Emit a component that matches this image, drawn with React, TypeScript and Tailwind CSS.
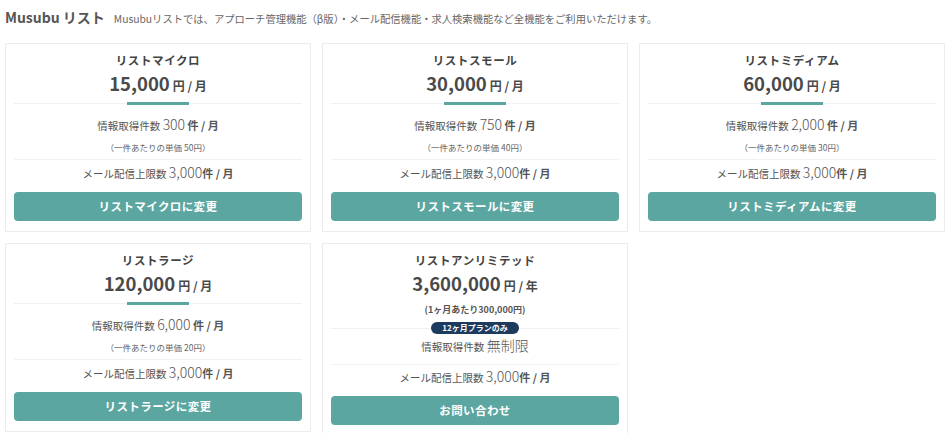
import React from "react";

const TEAL = "bg-[#5ba6a0]";

type Plan = {
  name: string;
  price: string;
  unit: string;
  count: string;
  unitPrice: string;
  button: string;
};

const plans: Plan[] = [
  { name: "リストマイクロ", price: "15,000", unit: "月", count: "300", unitPrice: "50円", button: "リストマイクロに変更" },
  { name: "リストスモール", price: "30,000", unit: "月", count: "750", unitPrice: "40円", button: "リストスモールに変更" },
  { name: "リストミディアム", price: "60,000", unit: "月", count: "2,000", unitPrice: "30円", button: "リストミディアムに変更" },
  { name: "リストラージ", price: "120,000", unit: "月", count: "6,000", unitPrice: "20円", button: "リストラージに変更" },
];

function Title({ name, price, unit }: { name: string; price: string; unit: string }) {
  return (
    <>
      <div className="pt-[6px] h-[26px] text-center text-[11.5px] leading-[20px] font-bold text-[#444] tracking-[0.6px]">{name}</div>
      <div className="h-[28px] text-center leading-[28px] text-[#4a4a4a]">
        <span className="text-[18.5px] font-bold leading-none">{price}</span>
        <span className="text-[12px] font-bold ml-[3px] leading-none">円 / {unit}</span>
      </div>
    </>
  );
}

function Mail() {
  return (
    <div className="h-[22px] text-center leading-[22px] text-[10.5px] text-[#555]">
      メール配信上限数 <span className="text-[14px] font-light leading-none">3,000</span>
      <span className="text-[11px] font-bold leading-none">件 / 月</span>
    </div>
  );
}

function Btn({ label }: { label: string }) {
  return (
    <div className={`mt-[7px] h-[29px] rounded-[4px] ${TEAL} flex items-center justify-center text-white text-[11.5px] font-bold tracking-[0.4px]`}>
      {label}
    </div>
  );
}

function Card({ p }: { p: Plan }) {
  return (
    <div className="border border-[#ececec] bg-white px-[8px] pb-[10px] flex flex-col">
      <Title name={p.name} price={p.price} unit={p.unit} />
      <div className="relative h-[3px] mt-[4px]">
        <div className="absolute inset-x-0 top-[1px] h-px bg-[#eef1f3]" />
        <div className={`relative mx-auto w-[62px] h-[3px] ${TEAL}`} />
      </div>
      <div className="mt-[10px] h-[22px] text-center leading-[22px] text-[10.5px] text-[#555]">
        情報取得件数 <span className="text-[14px] font-light leading-none">{p.count}</span>{" "}
        <span className="text-[11px] font-bold leading-none">件 / 月</span>
      </div>
      <div className="mt-[2px] h-[16px] text-center leading-[16px] text-[8.5px] text-[#666]">
        （一件あたりの単価 {p.unitPrice}）
      </div>
      <div className="mt-[4px] h-px bg-[#f0f2f3]" />
      <div className="mt-[3px]">
        <Mail />
      </div>
      <Btn label={p.button} />
    </div>
  );
}

function Unlimited() {
  return (
    <div className="border border-[#ececec] bg-white px-[8px] pb-[10px] flex flex-col">
      <Title name="リストアンリミテッド" price="3,600,000" unit="年" />
      <div className="mt-[4px] h-[16px] text-center leading-[16px] text-[9px] font-bold text-[#555]">
        (1ヶ月あたり300,000円)
      </div>
      <div className="relative mt-[4px] h-[12px] flex justify-center">
        <div className="absolute inset-x-0 top-[6px] h-px bg-[#eef1f3]" />
        <div className="relative w-[88px] h-[12px] rounded-full bg-[#1d3a5f] text-white text-[8px] font-bold leading-[12px] text-center">
          12ヶ月プランのみ
        </div>
      </div>
      <div className="mt-[2px] h-[22px] text-center leading-[22px] text-[10.5px] text-[#555]">
        情報取得件数 <span className="text-[14px] font-light leading-none">無制限</span>
      </div>
      <div className="mt-[6px] h-px bg-[#f0f2f3]" />
      <div className="mt-[2px]">
        <Mail />
      </div>
      <Btn label="お問い合わせ" />
    </div>
  );
}

export default function App() {
  return (
    <div
      className="w-[950px] h-[433px] overflow-hidden bg-white"
      style={{ fontFamily: '"Noto Sans CJK JP", "Noto Sans", sans-serif' }}
    >
      <div className="h-[43px] px-[5px] pt-[7px] flex items-baseline">
        <span className="text-[14px] font-bold text-[#555] leading-[20px]">Musubu リスト</span>
        <span className="ml-[9px] text-[10.3px] text-[#666] leading-[20px]">
          Musubuリストでは、アプローチ管理機能（β版）・メール配信機能・求人検索機能など全機能をご利用いただけます。
        </span>
      </div>
      <div className="px-[5px] grid grid-cols-3 gap-[11px] items-start">
        {plans.slice(0, 3).map((p) => (
          <Card key={p.name} p={p} />
        ))}
        <Card p={plans[3]} />
        <Unlimited />
      </div>
    </div>
  );
}
